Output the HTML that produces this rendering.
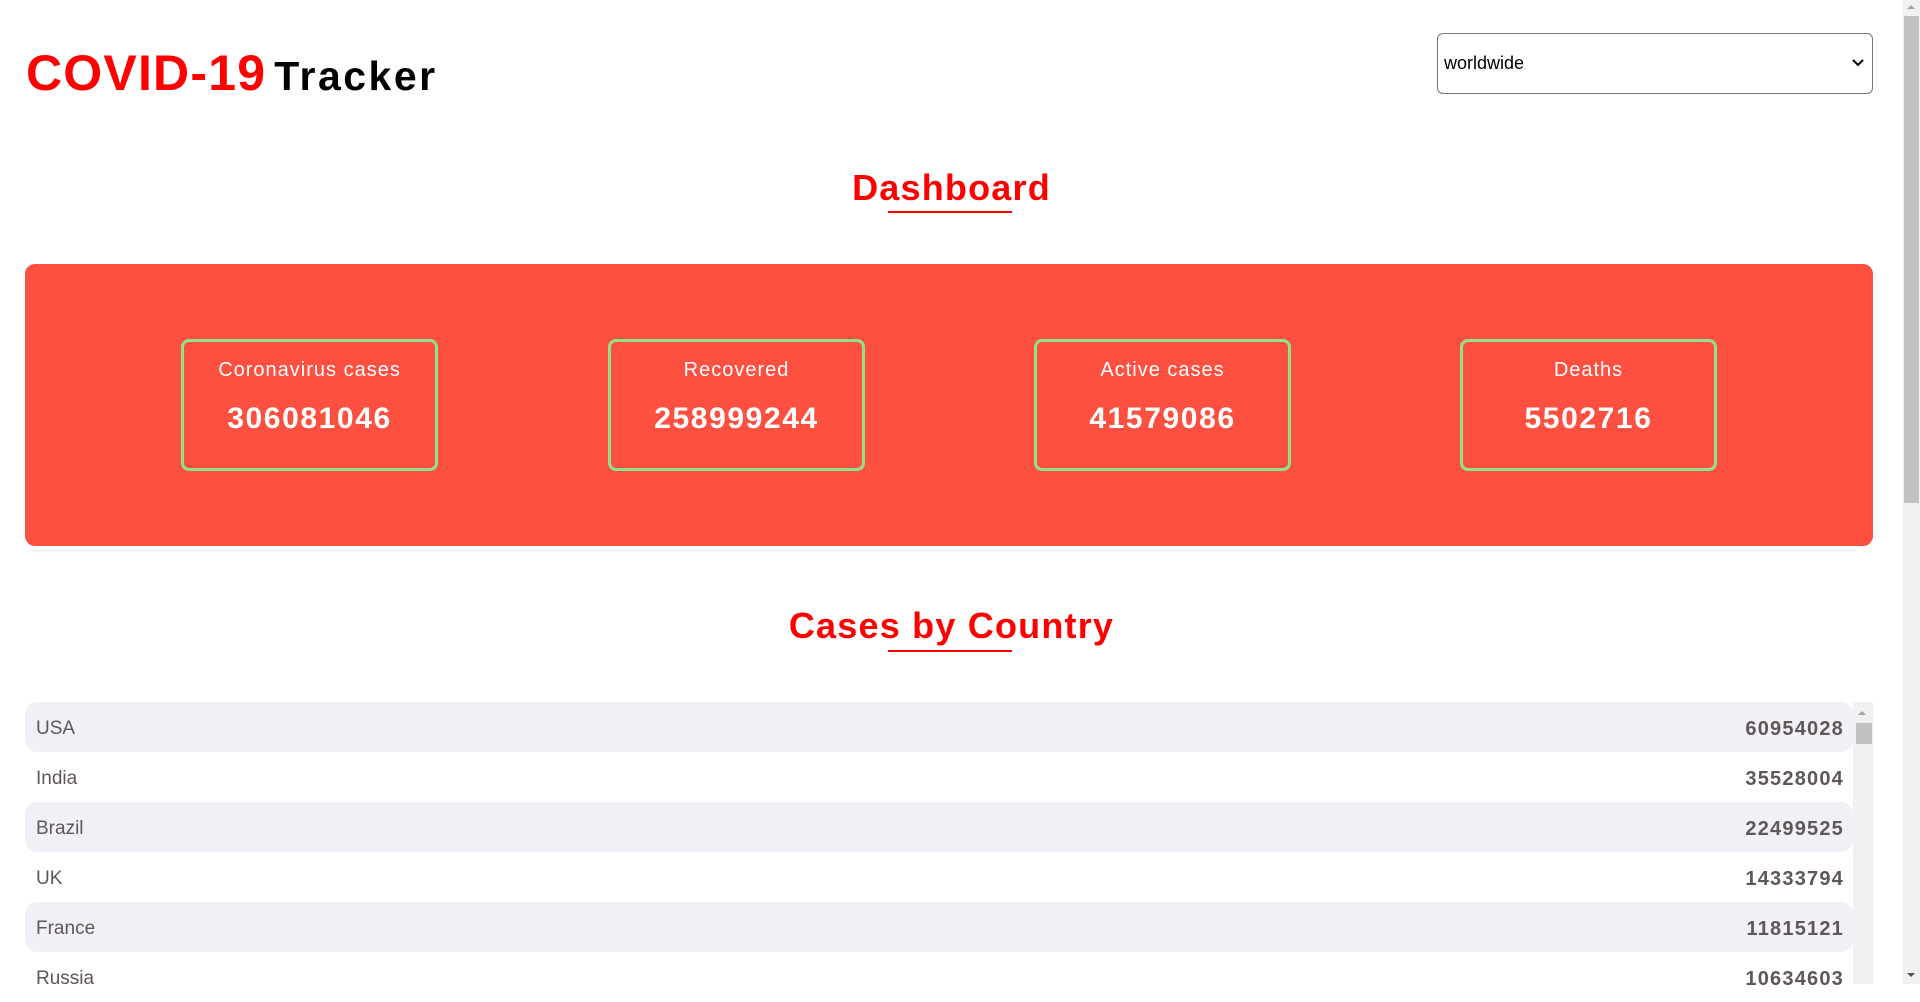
<!DOCTYPE html>
<html><head><meta charset="utf-8"><style>
*{box-sizing:border-box;margin:0;padding:0}
html,body{width:1920px;height:984px;overflow:hidden;background:#fff;font-family:"Liberation Sans",Arial,sans-serif}
.abs{position:absolute}
.t1{left:26px;top:44px;font-size:50px;font-weight:bold;color:#f00;letter-spacing:1.2px;white-space:nowrap}
.t1 span{color:#000;font-size:41px;margin-left:8px;letter-spacing:2.5px}
.sel{left:1437px;top:33px;width:436px;height:61px;border:1px solid #767676;border-radius:6px;font-size:18px;color:#000;padding:19px 0 0 6px}
.sel svg{position:absolute;right:8px;top:25px}
.h{left:0;width:1903px;text-align:center;color:#f00;font-weight:bold;font-size:36px;letter-spacing:1.2px}
.ul{height:2px;background:#f00;left:888px;width:124px}
.panel{left:25px;top:264px;width:1848px;height:282px;background:#fd5041;border-radius:10px}
.card{top:339px;width:257px;height:132px;border:3px solid #90e38a;border-radius:8px;color:#fff;text-align:center}
.card .l{margin-top:17px;font-size:20px;letter-spacing:1px}
.card .n{margin-top:20px;font-size:30px;font-weight:bold;letter-spacing:1.6px}
.row{left:25px;width:1828px;height:50px;color:#5f5757;font-size:19px;padding:4px 9px 0 11px;display:flex;justify-content:space-between;align-items:center;border-radius:12px}
.row b{font-size:20px;letter-spacing:1.2px}
.g{background:#f1f0f6}
.sb{left:1903px;top:0;width:17px;height:984px;background:#f1f1f1}
</style></head><body>
<div class="abs t1">COVID-19<span>Tracker</span></div>
<div class="abs sel">worldwide<svg width="12" height="8" viewBox="0 0 12 8"><path d="M1 1l5 5 5-5" stroke="#000" stroke-width="2" fill="none"/></svg></div>
<div class="abs h" style="top:167px">Dashboard</div>
<div class="abs ul" style="top:211px"></div>
<div class="abs panel"></div>
<div class="abs card" style="left:181px"><div class="l">Coronavirus cases</div><div class="n">306081046</div></div>
<div class="abs card" style="left:608px"><div class="l">Recovered</div><div class="n">258999244</div></div>
<div class="abs card" style="left:1034px"><div class="l">Active cases</div><div class="n">41579086</div></div>
<div class="abs card" style="left:1460px"><div class="l">Deaths</div><div class="n">5502716</div></div>
<div class="abs h" style="top:605px">Cases by Country</div>
<div class="abs ul" style="top:650px"></div>
<div class="abs row g" style="top:702px"><span>USA</span><b>60954028</b></div>
<div class="abs row" style="top:752px"><span>India</span><b>35528004</b></div>
<div class="abs row g" style="top:802px"><span>Brazil</span><b>22499525</b></div>
<div class="abs row" style="top:852px"><span>UK</span><b>14333794</b></div>
<div class="abs row g" style="top:902px"><span>France</span><b>11815121</b></div>
<div class="abs row" style="top:952px"><span>Russia</span><b>10634603</b></div>
<div class="abs" style="left:1853px;top:702px;width:20px;height:282px;background:#f1f1f1"></div>
<div class="abs" style="left:1856px;top:723px;width:16px;height:21px;background:#c1c1c1"></div>
<div class="abs" style="left:1858px;top:711px;width:0;height:0;border-left:4px solid transparent;border-right:4px solid transparent;border-bottom:4px solid #a3a3a3"></div>
<div class="abs sb"></div>
<div class="abs" style="left:1904px;top:16px;width:15px;height:487px;background:#c1c1c1"></div>
<div class="abs" style="left:1907px;top:5px;border-left:4px solid transparent;border-right:4px solid transparent;border-bottom:4px solid #a3a3a3"></div>
<div class="abs" style="left:1907px;top:973px;border-left:4px solid transparent;border-right:4px solid transparent;border-top:4px solid #505050"></div>
</body></html>
